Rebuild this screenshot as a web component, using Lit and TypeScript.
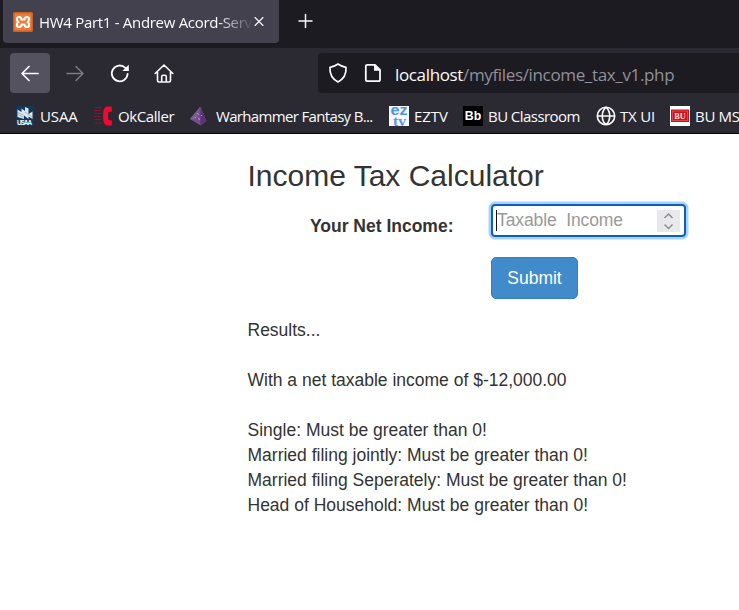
import { LitElement, html, css, svg } from "lit";
import { customElement } from "lit/decorators.js";
import { styleMap } from "lit/directives/style-map.js";

const stroke = (d: string, w = 1.6) =>
  svg`<path d=${d} fill="none" stroke="currentColor" stroke-width=${w} stroke-linecap="round" stroke-linejoin="round"/>`;

const favicons = {
  usaa: html`<svg width="20" height="20"><path d="M1 0h18v20H1z" fill="#12395b"/>
    <path d="M2.500 3.500l4 2.500V2.500L10 5V1l3.500 1.500V8l4-2.500V13L13.500 10.500V13L9 9.500V13L2.500 11z" fill="#dce6ec"/>
    <path d="M3 6.500l6 3M3 8.500l6 3M10 6l7 5" stroke="#7e9ab0" stroke-width=".6"/>
    <text x="9.500" y="19" text-anchor="middle" class="tiny" fill="#fff" font-size="6.300" textLength="15">USAA</text></svg>`,
  phone: html`<svg width="20" height="20"><path d="M1 1.500h7M0 4.500h7M1 7.500h6.500M0 10.500h7M1 13.500h6.500M1 17h7" stroke="#86152f" stroke-width="1"/>
    <path d="M12.500 .5H17q.8 0 .8 .8V5q0 .8-.8 .8h-2.500q-.9 4.200 0 8.400H17q.8 0 .8 .8v3.700q0 .8-.8 .8h-4Q9 18.500 9 10T12.500 .5z" fill="#f5082f"/></svg>`,
  gem: html`<svg width="20" height="20"><path d="M11.500 .5L1 13l10.500 6.500L17.500 15z" fill="#754c8f"/><path d="M11.500 .5L1 13l4 .8z" fill="#77648a"/>
    <path d="M11.500 .5v19l6-4.500z" fill="#5b3374"/><path d="M8.500 7l1 2M6 12l1.500-1M9.500 12l1 2M12 9l1 1" stroke="#c29adb" stroke-width="1"/></svg>`,
  eztv: html`<svg width="20" height="20"><path d="M0 0h20v20H0z" fill="#f4f8ff"/>
    <text x="10" y="9" text-anchor="middle" class="bold" font-size="14" textLength="17" lengthAdjust="spacingAndGlyphs" fill="#4c92e8">ez</text>
    <text x="10.500" y="19.500" text-anchor="middle" class="serif" font-size="14" textLength="13" lengthAdjust="spacingAndGlyphs" fill="#6b8ff0">tv</text></svg>`,
  bb: html`<svg width="20" height="20"><path d="M0 0h20v20H0z" fill="#000"/>
    <text x="10" y="14.200" text-anchor="middle" class="bold" font-size="12.500" textLength="16.500" lengthAdjust="spacingAndGlyphs" fill="#fff">Bb</text></svg>`,
  globe: html`<svg width="20" height="20">${stroke("M10 1.300a8.700 8.700 0 1 0 0 17.400a8.700 8.700 0 1 0 0-17.400zM10 1.300c-5 4-5 13.400 0 17.400M10 1.300c5 4 5 13.400 0 17.400M1.500 10h17", 1.6)}</svg>`,
  bu: html`<svg width="20" height="20"><path d="M0 0h20v20H0z" fill="#fff"/><path d="M1 3.500h18V16H1z" fill="#d0101b"/><path d="M2.500 5h15v9.500h-15z" fill="none" stroke="#e9656b" stroke-width=".6"/>
    <text x="10" y="12.800" text-anchor="middle" class="serif" font-size="8.500" textLength="11.500" lengthAdjust="spacingAndGlyphs" fill="#fbe3e3">BU</text></svg>`,
};

const bookmarks = [
  { icon: favicons.usaa, label: "USAA", gap: 5, width: 54, ls: -0.1 },
  { icon: favicons.phone, label: "OkCaller", gap: 4, width: 71, ls: -0.4 },
  { icon: favicons.gem, label: "Warhammer Fantasy B...", gap: 7, width: 173, ls: -0.66 },
  { icon: favicons.eztv, label: "EZTV", gap: 5, width: 49, ls: -0.1 },
  { icon: favicons.bb, label: "BU Classroom", gap: 5, width: 108, ls: -0.55 },
  { icon: favicons.globe, label: "TX UI", gap: 4, width: 50, ls: -0.2 },
  { icon: favicons.bu, label: "BU MSIT", gap: 5, width: 70, ls: -0.3 },
];

@customElement("browser-chrome")
class BrowserChrome extends LitElement {
  static styles = css`
    :host { display: block; background: #1c1b22; color: #fbfbfe; font-family: "Open Sans", "Noto Sans", sans-serif; font-size: 15px; white-space: nowrap; }
    svg { display: block; flex: none; overflow: visible; }
    .tiny, .bold { font-family: "Liberation Sans", sans-serif; font-weight: 700; }
    .serif { font-family: "Liberation Serif", serif; font-weight: 700; }
    .tabs { display: flex; align-items: center; height: 48px; box-sizing: border-box; padding: 0 0 5px 3px; }
    .tab { display: flex; align-items: center; box-sizing: border-box; width: 276px; height: 43px; padding-left: 10px; background: #42414d; border-radius: 0 0 4px 4px; }
    .title { width: 213px; margin-left: 6px; overflow: hidden; letter-spacing: -0.3px; line-height: 22px;
      -webkit-mask-image: linear-gradient(to right, #000 178px, transparent 215px); mask-image: linear-gradient(to right, #000 178px, transparent 215px); }
    .close { margin-left: 2px; }
    .plus { margin-left: 19px; }
    .nav { display: flex; align-items: center; height: 50px; background: #2b2a33; padding-left: 10px; }
    .back { display: flex; align-items: center; justify-content: center; width: 40px; height: 40px; border-radius: 4px; background: #53525e; }
    .forward { margin-left: 15px; color: #7b7a83; }
    .reload { margin-left: 25px; }
    .home { margin-left: 24px; }
    .url { display: flex; align-items: center; flex: 1; height: 40px; margin-left: 144px; padding-left: 10px; background: #1c1b22; border-radius: 4px 0 0 4px; }
    .page { margin-left: 15px; }
    .address { margin-left: 12px; font-size: 17px; line-height: 24px; letter-spacing: -0.35px; color: #91909a; padding-top: 4px; }
    .host { color: #fbfbfe; }
    .bookmarks { display: flex; align-items: center; height: 34px; padding: 1px 0 0 15px; background: #2b2a33; border-bottom: 1px solid #050507; overflow: hidden; }
    .bookmark { display: flex; align-items: center; flex: none; }
    .label { flex: none; line-height: 22px; }
  `;
  render() {
    return html`
      <div class="tabs">
        <div class="tab">
          <svg width="20" height="20"><rect width="20" height="20" rx="1.500" fill="#c9622a"/><rect x="1.500" y="1.500" width="17" height="17" rx="1" fill="#ee7b38"/>
            <path d="M5.500 10Q3.900 8.900 3.900 7.300 3.900 5 6.200 5 8.200 5 8.500 7.500h3Q11.800 5 13.800 5q2.300 0 2.300 2.300 0 1.600-1.600 2.700 1.600 1.100 1.600 2.700 0 2.300-2.300 2.300-2 0-2.300-2.500h-3Q8.200 15 6.200 15q-2.300 0-2.300-2.300 0-1.600 1.600-2.700z" fill="none" stroke="#fff" stroke-width="2.100" stroke-linejoin="round"/></svg>
          <div class="title">HW4 Part1 - Andrew Acord-Server</div>
          <svg class="close" width="10" height="10">${stroke("M1 .5l8 8M9 .5l-8 8", 1.1)}</svg>
        </div>
        <svg class="plus" width="16" height="16">${stroke("M7.500 .5v13M1 7h13", 1.5)}</svg>
      </div>
      <div class="nav">
        <div class="back"><svg width="20" height="20">${stroke("M18 10.500H2.200M9 3.500l-7 7 7 7", 1.7)}</svg></div>
        <svg class="forward" width="20" height="20">${stroke("M2 10.500h15.800M11 3.500l7 7-7 7", 1.5)}</svg>
        <svg class="reload" width="20" height="20">${stroke("M17.600 11a7.900 7.900 0 1 1-2.200-6.100L17.500 6.500", 1.8)}<path d="M18.800 1.700v6.400h-6.400z" fill="currentColor"/></svg>
        <svg class="home" width="20" height="20">${stroke("M1.200 10.500L10 2 18.800 10.500M3.500 8.500v9q0 1.500 1.500 1.500h10q1.500 0 1.500-1.500v-9M7.700 19v-5.200q0-1.500 1.500-1.500h1.600q1.500 0 1.500 1.500V19", 1.6)}</svg>
        <div class="url">
          <svg width="20" height="20">${stroke("M10 1q4 2.800 8 3.300.7 10.200-8 14.700Q1.300 14.500 2 4.300 6 3.800 10 1z", 1.7)}</svg>
          <svg class="page" width="20" height="20">${stroke("M4.500 1.800H12L17 6.800V16.500q0 1.700-1.700 1.700H4.500q-1.700 0-1.700-1.700v-13q0-1.700 1.700-1.700z", 1.8)}<path d="M11 1.500v6.300h6.300z" fill="currentColor"/></svg>
          <div class="address"><span class="host">localhost</span>/myfiles/income_tax_v1.php</div>
        </div>
      </div>
      <div class="bookmarks">
        ${bookmarks.map((b) => html`<div class="bookmark">${b.icon}
          <div class="label" style=${styleMap({ marginLeft: `${b.gap}px`, width: `${b.width}px`, letterSpacing: `${b.ls}px` })}>${b.label}</div></div>`)}
      </div>`;
  }
}

@customElement("tax-calculator")
class TaxCalculator extends LitElement {
  static styles = css`
    :host { display: block; padding: 25px 0 0 247.5px; color: #333; font-family: "Liberation Sans", Arial, sans-serif; font-size: 17.5px; line-height: 25px; }
    h1 { margin: 0; font-size: 30px; line-height: 34px; font-weight: 400; white-space: nowrap; }
    .row { display: flex; margin-top: 11px; }
    .name { width: 206px; padding-top: 10px; font-weight: 700; text-align: right; white-space: nowrap; }
    .field { display: flex; align-items: center; box-sizing: border-box; width: 195px; height: 33px; margin-left: 37.5px; padding: 0 4px 0 3px; border: 2px solid #0a5fbd; border-radius: 4px; box-shadow: 0 0 0 2.5px #a9d3fb; }
    .caret { width: 1px; height: 21px; background: #111; }
    .placeholder { flex: 1; color: #999; white-space: pre; letter-spacing: -0.1px; }
    .spinner { display: block; background: #e9e9ed; }
    .submit { display: block; width: 87px; height: 42px; margin: 18px 0 0 243.5px; padding: 0; border: 1px solid #357ebd; border-radius: 5px; background: #428bca; color: #fff; font: inherit; }
    .results { margin-top: 19px; }
  `;
  render() {
    const message = "Must be greater than 0!";
    const statuses = ["Single", "Married filing jointly", "Married filing Seperately", "Head of Household"];
    return html`
      <h1>Income Tax Calculator</h1>
      <div class="row">
        <div class="name">Your Net Income:</div>
        <div class="field"><span class="caret"></span><span class="placeholder">Taxable  Income</span>
          <svg class="spinner" width="23" height="22"><path d="M7.500 8l4-4 4 4M7.500 14.500l4 4 4-4" fill="none" stroke="#8c8c92" stroke-width="1.500"/></svg>
        </div>
      </div>
      <button class="submit">Submit</button>
      <div class="results">
        <div>Results...</div><br>
        <div>With a net taxable income of $-12,000.00</div><br>
        ${statuses.map((s) => html`<div>${s}: ${message}</div>`)}
      </div>`;
  }
}

@customElement("app-root")
class AppRoot extends LitElement {
  static styles = css`:host { display: block; height: 610px; overflow: hidden; background: #fff; }`;
  render() {
    return html`<browser-chrome></browser-chrome><tax-calculator></tax-calculator>`;
  }
}
